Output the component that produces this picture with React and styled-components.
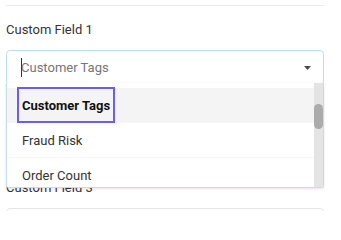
import styled, { createGlobalStyle } from "styled-components";

const GlobalStyle = createGlobalStyle`
  html, body {
    margin: 0;
    padding: 0;
    background: #fff;
  }
  body {
    font-family: Roboto, "Liberation Sans", Arial, sans-serif;
    -webkit-font-smoothing: antialiased;
  }
`;

const fields = ["Custom Field 1", "Custom Field 2", "Custom Field 3"];
const options = ["Customer Tags", "Fraud Risk", "Order Count", "Order Total"];

function App() {
  return (
    <>
      <GlobalStyle />
      <Page>
        <Divider />
        {fields.map((name, i) => (
          <Field key={name}>
            <Label>{name}</Label>
            <Select focused={i === 0}>
              {i === 0 && <Caret />}
              <Placeholder>{i === 0 ? "Customer Tags" : ""}</Placeholder>
              <Arrow width="7" height="4" viewBox="0 0 7 4">
                <polygon points="0,0 7,0 3.5,4" fill="#4a4a4a" />
              </Arrow>
              {i === 0 && (
                <Menu>
                  <List>
                    {options.map((opt, j) => (
                      <Option key={opt} active={j === 0}>
                        <OptionText active={j === 0}>{opt}</OptionText>
                      </Option>
                    ))}
                  </List>
                  <Track>
                    <Thumb />
                  </Track>
                </Menu>
              )}
            </Select>
          </Field>
        ))}
      </Page>
    </>
  );
}

const Page = styled.div`
  height: 211px;
  box-sizing: border-box;
  overflow: hidden;
  padding: 5px 17px 0 6px;
  display: flex;
  flex-direction: column;
`;

const Divider = styled.div`
  flex: none;
  height: 1px;
  background: #ececec;
`;

const Field = styled.div`
  flex: none;
  padding-top: 16px;
  display: flex;
  flex-direction: column;
`;

const Label = styled.div`
  font-size: 13px;
  line-height: 16px;
  color: #333;
  margin-bottom: 12px;
`;

const Select = styled.div`
  position: relative;
  height: 35px;
  box-sizing: border-box;
  border: 1px solid ${(p) => (p.focused ? "#bcdeec" : "#e6e6e6")};
  border-radius: 4px;
  display: flex;
  align-items: center;
  padding: 0 12px 0 14px;
`;

const Caret = styled.span`
  display: inline-block;
  width: 1px;
  height: 19px;
  margin-right: -1px;
  background: #333;
`;

const Placeholder = styled.span`
  flex: 1;
  font-size: 13px;
  color: #767676;
`;

const Arrow = styled.svg`
  display: block;
`;

const Menu = styled.div`
  position: absolute;
  z-index: 10;
  top: calc(100% - 1px);
  left: -1px;
  right: -1px;
  height: 104px;
  display: flex;
  background: #fff;
  border: 1px solid #c4dde8;
  border-top: none;
  border-radius: 0 0 3px 3px;
  box-shadow: 0 1px 3px rgba(0, 0, 0, 0.1);
  overflow: hidden;
`;

const List = styled.div`
  flex: 1;
  padding-top: 5px;
  overflow: hidden;
`;

const Option = styled.div`
  height: 35px;
  box-sizing: border-box;
  padding-left: 11px;
  display: flex;
  align-items: stretch;
  background: ${(p) => (p.active ? "#f4f4f4" : "#fff")};
  border-bottom: 1px solid #f6f6f6;
`;

const OptionText = styled.span`
  display: inline-flex;
  align-items: center;
  padding: 0 4px;
  font-size: 13px;
  color: ${(p) => (p.active ? "#111" : "#333")};
  font-weight: ${(p) => (p.active ? 700 : 400)};
  outline: ${(p) => (p.active ? "2px solid #6b5cf6" : "none")};
  outline-offset: -1px;
`;

const Track = styled.div`
  width: 9px;
  background: #e4e4e4;
  padding-top: 21px;
  box-sizing: border-box;
`;

const Thumb = styled.div`
  width: 9px;
  height: 25px;
  border-radius: 5px;
  background: #ababab;
`;

export default App;
